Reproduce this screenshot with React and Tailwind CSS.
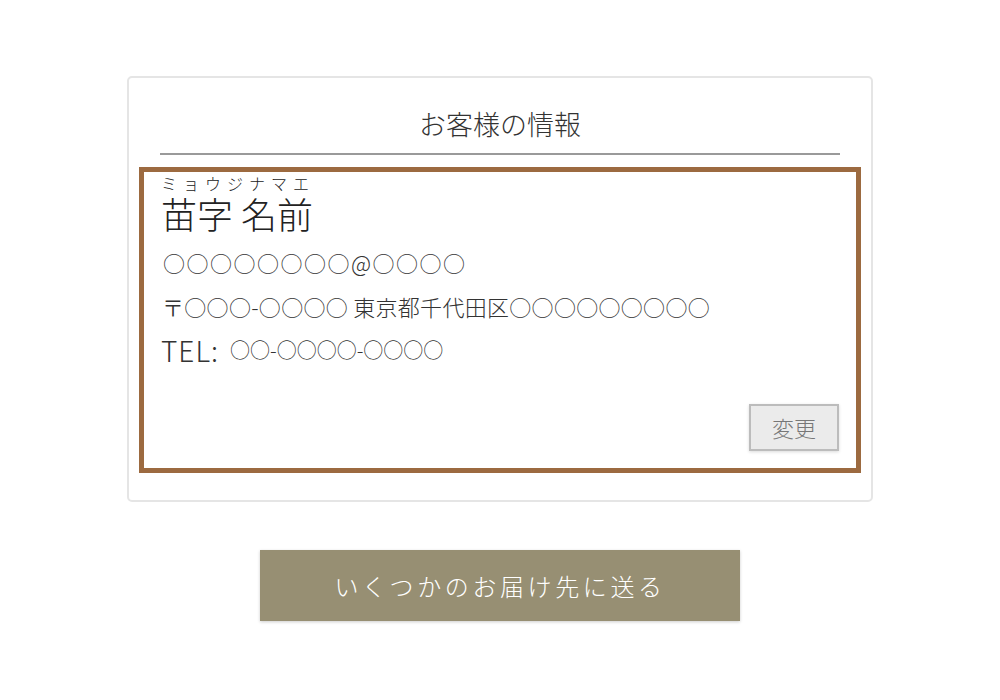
import React from "react";

const jp = { fontFamily: '"Noto Sans CJK JP", "Noto Sans", sans-serif' };

export default function App() {
  return (
    <div className="w-full bg-white pt-[76px] pb-[78px] text-[#333]" style={jp}>
      {/* Customer info card */}
      <section className="mx-auto w-[746px] rounded-[5px] border-2 border-[#e5e5e5] px-[10px] pb-[27px] pt-[30px]">
        <h2 className="text-center text-[27px] font-light leading-[32px] text-[#333]">お客様の情報</h2>
        <div className="mx-[21px] mt-[13px] h-[2px] bg-[#9a9a9a]" />

        <div className="mt-[12px] flex h-[306px] flex-col border-[5px] border-[#9c6a40] px-[17px] pb-[17px] pt-[3px]">
          <div className="text-[16px] font-light leading-[16px] tracking-[6px] text-[#222]">ミョウジナマエ</div>
          <div className="mt-[4px] text-[36px] font-light leading-[36px] text-[#222]">苗字 名前</div>
          <div className="mt-[9px] pl-[2px] text-[22px] font-light leading-[44px] tracking-[1.5px]">○○○○○○○○@○○○○</div>
          <div className="pl-[1px] text-[22px] font-light leading-[44px] tracking-[0.3px]">〒○○○-○○○○ 東京都千代田区○○○○○○○○○</div>
          <div className="flex h-[44px] items-center font-light">
            <span className="text-[28px] leading-[44px] tracking-[1px]">TEL:</span>
            <span className="ml-[11px] text-[20px] leading-[44px]">○○-○○○○-○○○○</span>
          </div>

          <div className="mt-auto flex justify-end">
            <button className="h-[47px] w-[90px] border-2 border-[#bcbcbc] bg-[#ebebeb] text-[22px] font-light text-[#777] shadow-[0_1px_3px_rgba(0,0,0,0.15)]">
              変更
            </button>
          </div>
        </div>
      </section>

      {/* Send to multiple addresses */}
      <div className="mt-[48px] flex justify-center">
        <button className="h-[71px] w-[480px] bg-[#978f73] text-[24px] font-light tracking-[0.15em] text-white shadow-[0_1px_3px_rgba(0,0,0,0.2)]">
          いくつかのお届け先に送る
        </button>
      </div>
    </div>
  );
}
